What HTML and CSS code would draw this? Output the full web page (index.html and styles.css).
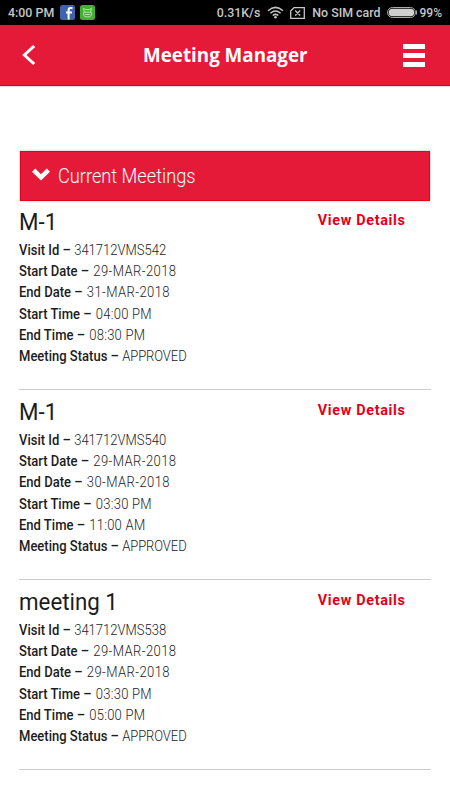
FILE: index.html
```html
<!DOCTYPE html>
<html lang="en">
  <head>
    <meta charset="UTF-8" />
    <meta name="viewport" content="width=device-width, initial-scale=1.0" />
    <title>Meeting Manager</title>
    <link rel="stylesheet" href="styles.css">
  </head>
  <body>
    <!-- Status bar -->
    <div class="status-bar">
      <span class="clock">4:00 PM</span>
      <svg class="app-icon" width="15" height="15" viewBox="0 0 15 15">
        <rect width="15" height="15" rx="2.5" fill="#3f63ad" />
        <path d="M8.6 14.5V5.2Q8.6 3 10.6 3H12.5M6 7.6h6" fill="none" stroke="#fff" stroke-width="2" />
      </svg>
      <svg class="app-icon second" width="15" height="15" viewBox="0 0 15 15">
        <rect width="15" height="15" rx="2.5" fill="#43b02f" />
        <path d="M4.2 6.5L3.6 3.4l2 1.2h3.8l2-1.2-.6 3.1q2.2 5.5-3.3 5.5T4.2 6.5zM4 7.2h7M5.2 9.5h4.6" fill="none" stroke="#c5eabb" stroke-width=".9" />
      </svg>
      <span class="speed">0.31K/s</span>
      <svg class="wifi" width="17" height="13" viewBox="0 0 17 13">
        <path d="M1 4.7Q8.5-2 16 4.7M3.4 7.2q5.1-4.5 10.2 0M5.7 9.5q2.8-2.3 5.6 0" fill="none" stroke="#c6c6c6" stroke-width="1.5" />
        <circle cx="8.5" cy="11.2" r="1.3" fill="#c6c6c6" />
      </svg>
      <svg class="sim" width="15" height="12" viewBox="0 0 15 12">
        <path d="M4 .7h10.3v10.6H.7V4zM5.2 3.5l5 5M10.2 3.5l-5 5" fill="none" stroke="#c6c6c6" stroke-width="1.3" />
      </svg>
      <span class="carrier">No SIM card</span>
      <svg class="battery" width="30" height="11" viewBox="0 0 30 11">
        <rect x=".5" y=".5" width="28" height="10" rx="5" fill="none" stroke="#aaa" />
        <rect x="1.7" y="1.7" width="25.6" height="7.6" rx="3.8" fill="#d0d0d0" />
        <path d="M29.5 3.5v4" stroke="#aaa" />
      </svg>
      <span class="percent">99%</span>
    </div>

    <!-- Header -->
    <div class="header">
      <svg class="back" width="14" height="20" viewBox="0 0 14 20">
        <path d="M12.2 1L2.4 10l9.8 9" fill="none" stroke="#fff" stroke-width="3" />
      </svg>
      <h1>Meeting Manager</h1>
      <div class="menu">
        <div></div>
        <div></div>
        <div></div>
      </div>
    </div>

    <div class="content">
      <div class="section-title">
        <svg width="18" height="13" viewBox="0 0 18 13">
          <path d="M1.6 2.2L9 9.3l7.4-7.1" fill="none" stroke="#fff" stroke-width="4.6" />
        </svg>
        <h2>Current Meetings</h2>
      </div>

      <div class="meeting">
        <div class="meeting-top">
          <h3>M-1</h3>
          <a class="details">View Details</a>
        </div>
        <p><b>Visit Id –</b> <span>341712VMS542</span></p>
        <p><b>Start Date –</b> <span class="date">29-MAR-2018</span></p>
        <p><b>End Date –</b> <span class="date">31-MAR-2018</span></p>
        <p><b>Start Time –</b> <span class="time">04:00 PM</span></p>
        <p><b>End Time –</b> <span class="time">08:30 PM</span></p>
        <p><b>Meeting Status –</b> <span class="state">APPROVED</span></p>
      </div>

      <div class="meeting">
        <div class="meeting-top">
          <h3>M-1</h3>
          <a class="details">View Details</a>
        </div>
        <p><b>Visit Id –</b> <span>341712VMS540</span></p>
        <p><b>Start Date –</b> <span class="date">29-MAR-2018</span></p>
        <p><b>End Date –</b> <span class="date">30-MAR-2018</span></p>
        <p><b>Start Time –</b> <span class="time">03:30 PM</span></p>
        <p><b>End Time –</b> <span class="time">11:00 AM</span></p>
        <p><b>Meeting Status –</b> <span class="state">APPROVED</span></p>
      </div>

      <div class="meeting">
        <div class="meeting-top">
          <h3>meeting 1</h3>
          <a class="details">View Details</a>
        </div>
        <p><b>Visit Id –</b> <span>341712VMS538</span></p>
        <p><b>Start Date –</b> <span class="date">29-MAR-2018</span></p>
        <p><b>End Date –</b> <span class="date">29-MAR-2018</span></p>
        <p><b>Start Time –</b> <span class="time">03:30 PM</span></p>
        <p><b>End Time –</b> <span class="time">05:00 PM</span></p>
        <p><b>Meeting Status –</b> <span class="state">APPROVED</span></p>
      </div>
    </div>
  </body>
</html>
```

FILE: styles.css
```css
* {
  margin: 0;
  padding: 0;
  box-sizing: border-box;
}

body {
  height: 800px;
  background: #fff;
  color: #1c1c1c;
  font-family: Roboto, sans-serif;
  overflow: hidden;
}

.status-bar {
  display: flex;
  align-items: center;
  height: 25px;
  padding: 0 8px;
  background: #000;
  color: #c6c6c6;
  font-size: 12.4px;
  font-weight: 500;
  white-space: nowrap;
}

.clock {
  width: 52px;
}

.app-icon.second {
  margin-left: 5px;
}

.speed {
  margin-left: auto;
}

.wifi {
  margin-left: 7px;
}

.sim {
  margin: 0 7px 0 6px;
}

.battery {
  margin: 0 3px 0 6px;
}

.percent {
  font-size: 12px;
}

.header {
  display: flex;
  align-items: center;
  height: 61px;
  padding: 0 25px 0 22px;
  background: #e51a38;
  border-bottom: 1px solid #d9001b;
  box-shadow: 0 1px 1px #ddd;
}

.header h1 {
  margin-left: 107px;
  color: #fff;
  font-family: "Open Sans", sans-serif;
  font-size: 18.8px;
  font-weight: 700;
}

.menu {
  display: flex;
  flex-direction: column;
  gap: 4px;
  width: 22px;
  margin-left: auto;
}

.menu div {
  height: 5px;
  background: #fff;
}

.content {
  padding: 65px 19px 0;
}

.section-title {
  display: flex;
  align-items: center;
  height: 50px;
  margin: 0 1px;
  padding: 0 0 3px 11px;
  background: #e51a38;
  border: 1px solid #e2001a;
  box-shadow: 0 0 2px #aaa;
}

.section-title svg {
  margin-bottom: 1px;
}

.section-title h2 {
  margin: 3px 0 0 8px;
  color: #fff;
  font-size: 20px;
  font-weight: 300;
  transform: scaleX(0.91);
  transform-origin: left;
}

.meeting {
  height: 190px;
  padding-top: 7px;
  border-bottom: 1px solid #ccc;
}

.meeting:nth-child(2) {
  height: 189px;
  padding-top: 6px;
}

.meeting-top {
  display: flex;
  justify-content: space-between;
  height: 33px;
  padding-right: 25px;
}

.meeting h3 {
  font-size: 24px;
  font-weight: 400;
  line-height: 30px;
  transform: scaleX(0.93);
  transform-origin: left;
}

.details {
  color: #e2001a;
  font-size: 15px;
  font-weight: 700;
  letter-spacing: 0.7px;
  line-height: 26px;
  transform: scaleX(0.96);
  transform-origin: right;
}

/* narrow look for the detail rows */
.meeting p {
  font-size: 14px;
  line-height: 21.2px;
  white-space: nowrap;
  transform: scaleX(0.93);
  transform-origin: left;
}

.meeting b {
  font-weight: 500;
}

.meeting span {
  font-weight: 300;
}

.meeting .date {
  margin-left: 1px;
  letter-spacing: 0.45px;
}

.meeting .time {
  margin-left: 1px;
  letter-spacing: 0.27px;
}

.meeting .state {
  letter-spacing: -0.1px;
}
```
